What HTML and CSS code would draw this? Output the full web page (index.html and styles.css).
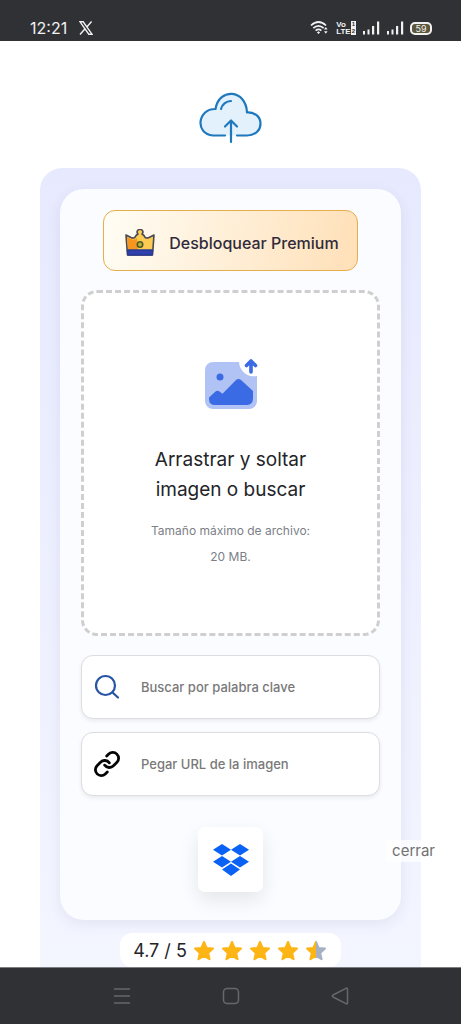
FILE: index.html
```html
<!DOCTYPE html>
<html lang="es">
<head>
<meta charset="utf-8">
<meta name="viewport" content="width=device-width, initial-scale=1">
<title>Buscar por imagen</title>
<link rel="stylesheet" href="styles.css">
</head>
<body>
<header class="status">
  <span class="time">12:21</span>
  <svg class="x-logo" width="14" height="14" viewBox="0 0 14 14" fill="none" stroke="#f1f1f2" stroke-width="1.400"><path d="M1 .8h3.2L13 13.2H9.800zM12.600.5 8 5.700M5.800 8 1 13.500"/></svg>
  <div class="indicators">
    <svg width="20" height="16" viewBox="0 0 20 16" fill="none" stroke="#f1f1f2" stroke-width="1.700"><path d="M1 5.500Q8.500-1.500 16 5.500M3.300 8.200Q8.500 3.600 13.700 8.200M5.600 10.700Q8.500 8.200 11.400 10.700"/><path d="M8.500 11.200l1.600 1.300-1.600 1.600-1.600-1.600z" fill="#f1f1f2" stroke="none"/><path d="M14 9.500l1.800-2.500 1.800 2.500zM14 11.200l1.800 2.500 1.800-2.500z" fill="#f1f1f2" stroke="none"/></svg>
    <span class="volte"><span>Vo<b>1</b></span><span>LTE<b>2</b></span></span>
    <svg width="18" height="14" viewBox="0 0 18 14" fill="#f1f1f2"><path d="M1 10h2v3.500H1zM5.500 8.500h2v5h-2zM10 5h2.200v8.500H10zM15 .5h2.200v13H15z"/></svg>
    <svg width="18" height="14" viewBox="0 0 18 14" fill="#f1f1f2"><path d="M1 10h2v3.500H1zM5.500 8.500h2v5h-2zM10 5h2.200v8.500H10zM15 .5h2.200v13H15z"/></svg>
    <span class="battery">59</span>
  </div>
</header>

<main class="page">
  <svg class="cloud" width="64" height="52" viewBox="1 1 64 52" fill="none" stroke="#1d78bd" stroke-width="2.200" stroke-linecap="round" stroke-linejoin="round">
    <path d="M27 44.500H15C-3.500 43 -.5 17.500 17.500 18 21-3.500 48-2 49 21.500 67 20.500 67 44.500 49 44.500H39" fill="#e3f1fd"/>
    <path d="M23 18c1-4.500 5-8 10-8M33 51V30M27 35.500l6-6 6 6"/>
  </svg>

  <section class="panel">
    <div class="card">
      <button class="premium" type="button">
        <svg width="30" height="28" viewBox="0 0 30 28" stroke="#4a4a55" stroke-width="1.600" stroke-linejoin="round">
          <path d="M1 6l5 2.500q4 1.500 5-2l2-1.500a2.800 2.800 0 1 1 4 0l2 1.500q1 3.500 5 2L29 6l-1.500 20h-25z" fill="#fbcb52"/>
          <path d="M2 8l4 2q4 1.500 6-1l1 12H3.200z" fill="#f7961e" stroke="none"/>
          <path d="M2.500 21h25l-.5 5H3z" fill="#2f3fae" stroke="#2b3a92"/>
          <circle cx="15" cy="15.500" r="2.700" fill="#b8b53a" stroke="#4b5a22"/>
        </svg>
        <span>Desbloquear Premium</span>
      </button>

      <button class="dropzone" type="button">
        <svg width="54" height="52" viewBox="0 0 54 52">
          <path d="M9 4h26a15 15 0 0 0 18 14v25a8 8 0 0 1-8 8H9a8 8 0 0 1-8-8V12a8 8 0 0 1 8-8z" fill="#b1c3f5"/>
          <circle cx="16" cy="19" r="3.500" fill="#3a6be4"/>
          <path d="M5 39.500l6.500-6q2-1.500 4 0l3 2.300L32 22q2.500-2 5 0L49 33v7q0 7-6 7H11q-6 0-6-6z" fill="#3a6be4"/>
          <path d="M47 14V5M42.500 7.500L47 3l4.500 4.500" fill="none" stroke="#3a6be4" stroke-width="3.600" stroke-linecap="round" stroke-linejoin="round"/>
        </svg>
        <span class="drop-title">Arrastrar y soltar<br>imagen o buscar</span>
        <span class="drop-note">Tamaño máximo de archivo:<br>20 MB.</span>
      </button>

      <label class="field">
        <svg width="28" height="28" viewBox="0 0 28 28" fill="none" stroke="#2854a5" stroke-width="2.200" stroke-linecap="round"><circle cx="12.500" cy="12.500" r="9.500"/><path d="M19.500 19.500l5.500 5"/></svg>
        <input type="text" placeholder="Buscar por palabra clave" aria-label="Buscar por palabra clave">
      </label>
      <label class="field">
        <svg width="28" height="28" viewBox="0 0 24 24" fill="none" stroke="#050505" stroke-width="2.400" stroke-linecap="round" stroke-linejoin="round"><path d="M10 13a5 5 0 0 0 7.540.540l3-3a5 5 0 0 0-7.070-7.070l-1.720 1.710"/><path d="M14 11a5 5 0 0 0-7.540-.540l-3 3a5 5 0 0 0 7.070 7.070l1.710-1.710"/></svg>
        <input type="text" placeholder="Pegar URL de la imagen" aria-label="Pegar URL de la imagen">
      </label>

      <button class="dropbox" type="button" aria-label="Dropbox">
        <svg width="36" height="34" viewBox="0 0 36 34" fill="#0a62f4"><path d="M9 1l9 5.800-9 5.800L0 6.800zM27 1l9 5.800-9 5.800-9-5.800zM9 13l9 5.800-9 5.800-9-5.800zM27 13l9 5.800-9 5.800-9-5.800zM18 20.500l9 6-9 6.500-9-6.500z"/></svg>
      </button>
    </div>

    <div class="rating">
      <span>4.7 / 5</span>
      <svg class="defs" width="0" height="0"><defs>
        <linearGradient id="half"><stop offset=".5" stop-color="#fdb515"/><stop offset=".5" stop-color="#a6b0c5"/></linearGradient>
        <path id="star" d="M11 3l2.600 5.900 6.400.700-4.800 4.300 1.400 6.300L11 17l-5.600 3.200 1.400-6.300L2 9.600l6.400-.700z" stroke-width="2" stroke-linejoin="round"/>
      </defs></svg>
      <div class="stars" role="img" aria-label="4.7 de 5 estrellas">
        <svg width="22" height="22"><use href="#star" fill="#fdb515" stroke="#fdb515"/></svg>
        <svg width="22" height="22"><use href="#star" fill="#fdb515" stroke="#fdb515"/></svg>
        <svg width="22" height="22"><use href="#star" fill="#fdb515" stroke="#fdb515"/></svg>
        <svg width="22" height="22"><use href="#star" fill="#fdb515" stroke="#fdb515"/></svg>
        <svg width="22" height="22"><use href="#star" fill="url(#half)" stroke="url(#half)"/></svg>
      </div>
    </div>
    <button class="close" type="button">cerrar</button>
  </section>
</main>

<nav class="nav">
  <button type="button" aria-label="Recientes"><svg width="18" height="18" viewBox="0 0 18 18"><path d="M1 2h16M1 9h16M1 16h16"/></svg></button>
  <button type="button" aria-label="Inicio"><svg width="18" height="18" viewBox="0 0 18 18"><rect x="1.500" y="1.500" width="15" height="15" rx="3.500"/></svg></button>
  <button type="button" aria-label="Atrás"><svg width="18" height="18" viewBox="0 0 18 18"><path d="M16.500 2v14q0 1.500-1.500.7L2 10q-1.500-1 0-2L15 1.300q1.500-.8 1.500.7z"/></svg></button>
</nav>
</body>
</html>
```
FILE: styles.css
```css
* {
  box-sizing: border-box;
}

body {
  margin: 0;
  min-height: 100vh;
  display: flex;
  flex-direction: column;
  background: #fff;
  color: #232428;
  font-family: Inter, "Liberation Sans", sans-serif;
}

button {
  margin: 0;
  padding: 0;
  border: 0;
  background: none;
  color: inherit;
  font: inherit;
  cursor: pointer;
}

svg {
  flex: none;
}

.status {
  display: flex;
  align-items: center;
  height: 41px;
  padding: 15px 29px 0 30px;
  background: #303135;
  color: #f1f1f2;
}

.time {
  font-size: 16px;
}

.x-logo {
  margin-left: 12px;
}

.indicators {
  display: flex;
  align-items: center;
  gap: 6px;
  margin-left: auto;
}

.volte {
  display: flex;
  flex-direction: column;
  font-family: "Liberation Sans", sans-serif;
  font-size: 8px;
  font-weight: 700;
  line-height: 7px;
}

.volte span {
  display: flex;
  justify-content: space-between;
}

.volte b {
  padding: 0 1px;
  background: #f1f1f2;
  color: #303135;
  font-size: 6px;
}

.battery {
  width: 22px;
  height: 13px;
  border: 2px solid #f1f1f2;
  border-radius: 5px;
  background: #5b563c;
  font-size: 9px;
  line-height: 9px;
  text-align: center;
}

.page {
  flex: 1;
  display: flex;
  flex-direction: column;
  padding: 51px 40px 0;
}

.cloud {
  align-self: center;
  margin-bottom: 24px;
}

.panel {
  position: relative;
  flex: 1;
  display: flex;
  flex-direction: column;
  align-items: center;
  padding: 21px 20px 0;
  border-radius: 22px 22px 0 0;
  background: linear-gradient(#e7eafe, #f3f5ff);
}

.card {
  align-self: stretch;
  display: flex;
  flex-direction: column;
  align-items: center;
  padding: 21px 21px 28px;
  border-radius: 24px;
  background: #fbfcff;
  box-shadow: 0 4px 14px rgba(70, 70, 120, 0.09);
}

.premium {
  display: flex;
  align-items: center;
  gap: 14px;
  height: 61px;
  padding: 4px 18px 0 21px;
  border: 1px solid #e6ad4b;
  border-radius: 12px;
  background: linear-gradient(100deg, #fffdf5, #ffe0b8);
  color: #302b3a;
  font-size: 16px;
  font-weight: 500;
}

.dropzone {
  display: flex;
  flex-direction: column;
  align-items: center;
  width: 100%;
  height: 346px;
  margin: 19px 0;
  padding-top: 65px;
  border: 3px dashed #cfcfcf;
  border-radius: 16px;
  background: #fff;
}

.drop-title {
  margin-top: 35px;
  font-size: 19px;
  font-weight: 400;
  line-height: 30px;
}

.drop-note {
  margin-top: 13px;
  color: #7c8087;
  font-size: 12px;
  font-weight: 400;
  line-height: 26px;
}

.field {
  display: flex;
  align-items: center;
  gap: 20px;
  width: 100%;
  height: 64px;
  padding: 0 11px;
  border: 1px solid #dddde0;
  border-radius: 12px;
  background: #fff;
  box-shadow: 0 2px 4px rgba(0, 0, 0, 0.07);
}

.field + .field {
  margin-top: 13px;
}

.field input {
  flex: 1;
  min-width: 0;
  padding: 0;
  border: 0;
  outline: 0;
  background: none;
  color: #232428;
  font: 500 13px Inter, "Liberation Sans", sans-serif;
}

.field input::placeholder {
  color: #797979;
  opacity: 1;
}

.dropbox {
  display: grid;
  place-items: center;
  width: 65px;
  height: 65px;
  margin-top: 31px;
  border-radius: 7px;
  background: #fff;
  box-shadow: 0 8px 20px rgba(0, 0, 0, 0.09);
}

.rating {
  display: flex;
  align-items: center;
  gap: 6px;
  height: 34px;
  margin-top: 13px;
  padding: 0 14px 0 13px;
  border-radius: 12px;
  background: #fff;
  font-size: 18px;
}

.defs {
  position: absolute;
}

.stars {
  display: flex;
  gap: 6px;
}

.close {
  position: absolute;
  right: -20px;
  bottom: 105px;
  padding: 1px 6px;
  background: rgba(255, 255, 255, 0.7);
  color: #717171;
  font-family: Inter, sans-serif;
  font-size: 15px;
  line-height: 20px;
}

.nav {
  display: flex;
  justify-content: center;
  gap: 91px;
  height: 57px;
  border-top: 1px solid #7d7e82;
  background: #303135;
}

.nav svg {
  display: block;
  fill: none;
  stroke: #66676b;
  stroke-width: 1.5px;
}
```
